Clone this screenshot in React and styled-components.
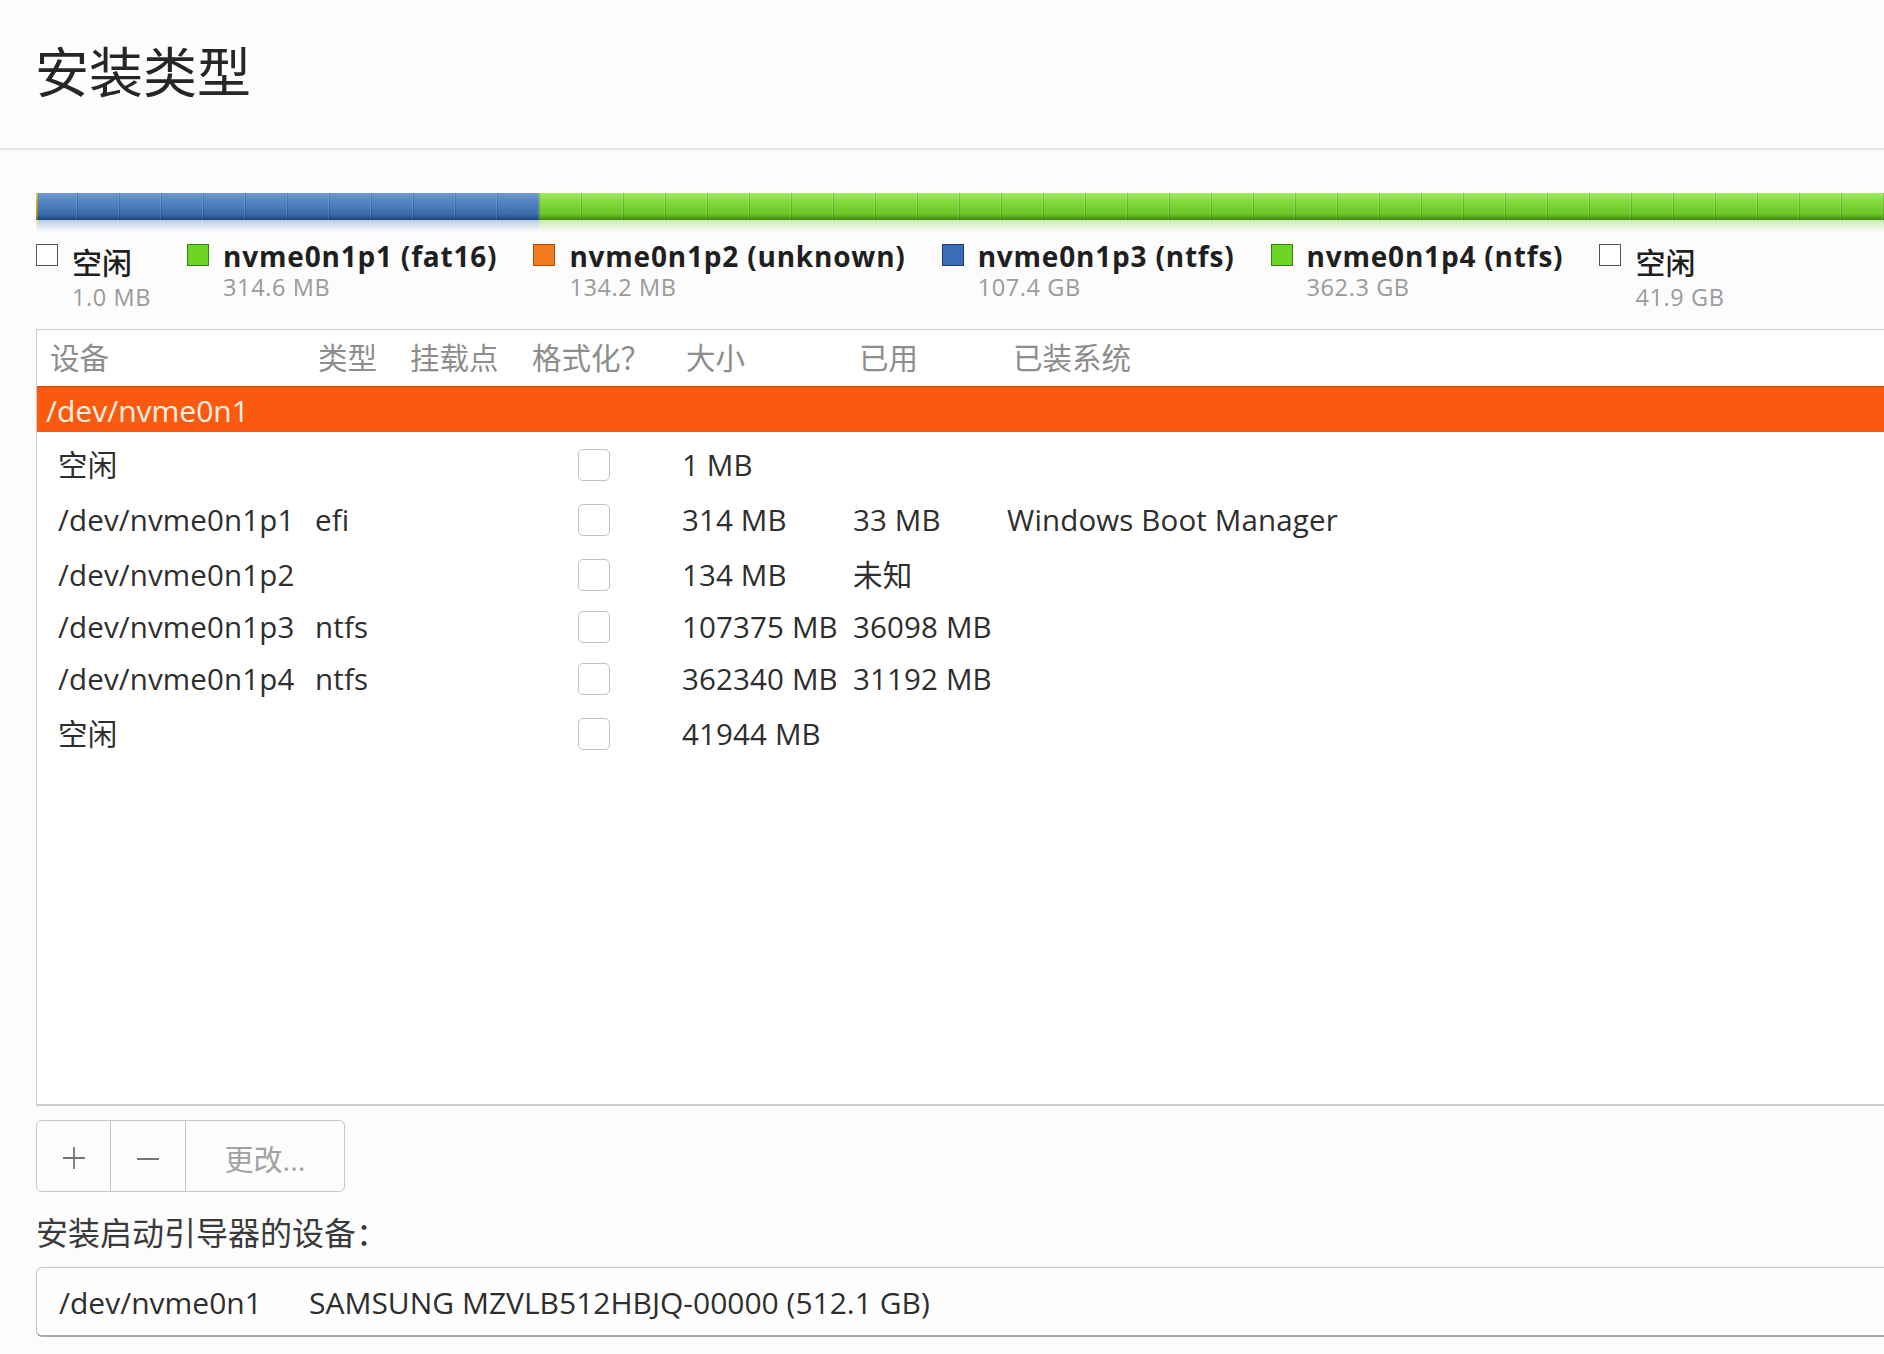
import React from 'react';
import styled, { createGlobalStyle } from 'styled-components';

const GlobalStyle = createGlobalStyle`
  html, body {
    margin: 0;
    padding: 0;
    background: #fcfcfc;
    overflow: hidden;
  }
  body {
    font-family: "Open Sans", "Noto Sans CJK SC", sans-serif;
    color: #333;
  }
`;

const Page = styled.div`
  width: 1884px;
  height: 1354px;
  overflow: hidden;
  background: #fcfcfc;
`;

const Header = styled.header`
  padding: 38px 0 46px 35px;
  border-bottom: 2px solid #e4e4e4;
  background: #fdfdfd;
`;

const Title = styled.h1`
  margin: 0;
  font-family: "Noto Sans CJK SC", sans-serif;
  font-size: 54px;
  font-weight: 400;
  line-height: 64px;
  color: #262626;
`;

const Main = styled.main`
  width: 2390px;
  padding-left: 36px;
`;

// partition bar
const Bar = styled.div`
  position: relative;
  display: flex;
  height: 27px;
  margin-top: 43px;

  &::after {
    content: '';
    position: absolute;
    inset: 0;
    pointer-events: none;
    background: repeating-linear-gradient(
      to right,
      transparent 0 40px,
      rgba(255, 255, 255, 0.12) 40px 41px,
      rgba(0, 0, 0, 0.16) 41px 42px
    );
  }
`;

const fills = {
  blue: ['#7099cf', '#5282c2', '#3d6cad', '#1e4478'],
  green: ['#a2ec62', '#80d93a', '#69c626', '#3f8a12'],
  orange: ['#ffa055', '#f6801f', '#e46a10', '#a34806'],
  free: ['#f4f4f4', '#ececec', '#e2e2e2', '#b8b8b8'],
};

const Segment = styled.div`
  position: relative;
  flex: none;
  height: 100%;
  background: ${({ $kind }) => {
    const c = fills[$kind];
    return `linear-gradient(to bottom, ${c[0]} 0%, ${c[1]} 35%, ${c[2]} 78%, ${c[3]} 100%)`;
  }};

  &::after {
    content: '';
    position: absolute;
    left: 0;
    right: 0;
    top: 100%;
    height: 12px;
    background: ${({ $kind }) =>
      `linear-gradient(to bottom, ${fills[$kind][2]}55, transparent)`};
  }
`;

// legend
const Legend = styled.div`
  display: flex;
  align-items: flex-start;
  gap: 36px;
  height: 89px;
  margin-top: 20px;
`;

const LegendItem = styled.div`
  display: flex;
  align-items: flex-start;
  gap: 14px;
`;

const swatchColors = {
  free: ['#ffffff', '#555555'],
  green: ['#6bd425', '#3b7f12'],
  orange: ['#f47b1d', '#a4500f'],
  blue: ['#3b6db4', '#1c3a6a'],
};

const Swatch = styled.span`
  flex: none;
  width: 20px;
  height: 20px;
  margin-top: 4px;
  background: ${({ $kind }) => swatchColors[$kind][0]};
  border: 1.5px solid ${({ $kind }) => swatchColors[$kind][1]};
`;

const LegendText = styled.div`
  display: flex;
  flex-direction: column;
  gap: ${({ $free }) => ($free ? '4px' : '1px')};
  padding-top: ${({ $free }) => ($free ? '7px' : '0')};
`;

const LegendLabel = styled.span`
  font-size: ${({ $free }) => ($free ? '30px' : '28px')};
  font-weight: ${({ $free }) => ($free ? 500 : 700)};
  letter-spacing: ${({ $free }) => ($free ? '0' : '0.8px')};
  line-height: 32px;
  color: #1f1f1f;
  white-space: nowrap;
`;

const LegendSize = styled.span`
  font-size: 23.5px;
  letter-spacing: 0.6px;
  line-height: 28px;
  color: #9a9a9a;
  white-space: nowrap;
`;

// table
const TableBox = styled.div`
  box-sizing: border-box;
  height: 777px;
  background: #ffffff;
  border-top: 1px solid #cbcbcb;
  border-left: 1px solid #cbcbcb;
  border-bottom: 2px solid #cdcdcd;
`;

const columns = '274px 94px 122px 150px 172px 154px 1fr';

const HeadRow = styled.div`
  display: grid;
  grid-template-columns: ${columns};
  align-items: center;
  height: 56px;
`;

const HeadCell = styled.div`
  padding-left: ${({ $pad }) => $pad}px;
  font-size: 29.5px;
  line-height: 40px;
  color: #8d8d8d;
  white-space: nowrap;
`;

const DiskRow = styled.div`
  box-sizing: border-box;
  display: flex;
  align-items: center;
  height: 46px;
  padding: 3px 0 0 9px;
  background: #fa5a10;
  border-top: 1px solid #d8480a;
  color: #fff1e2;
  font-size: 30px;
  line-height: 40px;
`;

const Rows = styled.div`
  padding-top: 5px;
`;

const Row = styled.div`
  display: grid;
  grid-template-columns: ${columns};
  align-items: center;
  height: ${({ $h }) => $h}px;
`;

const Cell = styled.div`
  padding-left: ${({ $pad }) => $pad}px;
  font-size: 29.5px;
  letter-spacing: 0.15px;
  line-height: 40px;
  color: #2e2e2e;
  white-space: nowrap;
`;

const Check = styled.span`
  display: block;
  box-sizing: border-box;
  width: 32px;
  height: 32px;
  margin-left: 51px;
  border: 1.5px solid #c2c2c2;
  border-radius: 5px;
  background: #fff;
`;

// buttons
const ButtonGroup = styled.div`
  display: flex;
  width: fit-content;
  height: 70px;
  margin-top: 14px;
  border: 1px solid #c6c6c6;
  border-radius: 6px;
  background: #fdfdfd;
  overflow: hidden;
`;

const GroupButton = styled.button`
  display: flex;
  align-items: center;
  justify-content: center;
  width: ${({ $w }) => $w}px;
  padding: 4px 0 0;
  border: none;
  border-left: ${({ $first }) => ($first ? 'none' : '1px solid #c6c6c6')};
  background: transparent;
  font-family: inherit;
  font-size: 29px;
  color: #a2a2a2;
`;

const FieldLabel = styled.div`
  margin-top: 21px;
  font-size: 32px;
  line-height: 40px;
  color: #3a3a3a;
`;

const Combo = styled.div`
  box-sizing: border-box;
  display: flex;
  align-items: center;
  height: 70px;
  margin-top: 14px;
  padding: 3px 0 0 22px;
  background: #fefefe;
  border: 1px solid #c4c4c4;
  border-bottom: 2px solid #a9a9a9;
  border-radius: 6px;
  font-size: 30px;
  line-height: 40px;
  color: #2e2e2e;
`;

const ComboDevice = styled.span`
  width: 250px;
  flex: none;
`;

const parts = [
  { kind: 'free', mb: 1 },
  { kind: 'green', mb: 314.6 },
  { kind: 'orange', mb: 134.2 },
  { kind: 'blue', mb: 107400 },
  { kind: 'green', mb: 362300 },
  { kind: 'free', mb: 41900 },
];
const totalMb = parts.reduce((s, p) => s + p.mb, 0);

const legend = [
  { kind: 'free', label: '空闲', size: '1.0 MB', free: true },
  { kind: 'green', label: 'nvme0n1p1 (fat16)', size: '314.6 MB' },
  { kind: 'orange', label: 'nvme0n1p2 (unknown)', size: '134.2 MB' },
  { kind: 'blue', label: 'nvme0n1p3 (ntfs)', size: '107.4 GB' },
  { kind: 'green', label: 'nvme0n1p4 (ntfs)', size: '362.3 GB' },
  { kind: 'free', label: '空闲', size: '41.9 GB', free: true },
];

const headers = [
  ['设备', 13],
  ['类型', 7],
  ['挂载点', 5],
  ['格式化？', 5],
  ['大小', 9],
  ['已用', 10],
  ['已装系统', 10],
];

const rows = [
  { dev: '空闲', type: '', size: '1 MB', used: '', sys: '', h: 55 },
  { dev: '/dev/nvme0n1p1', type: 'efi', size: '314 MB', used: '33 MB', sys: 'Windows Boot Manager', h: 55 },
  { dev: '/dev/nvme0n1p2', type: '', size: '134 MB', used: '未知', sys: '', h: 55 },
  { dev: '/dev/nvme0n1p3', type: 'ntfs', size: '107375 MB', used: '36098 MB', sys: '', h: 49 },
  { dev: '/dev/nvme0n1p4', type: 'ntfs', size: '362340 MB', used: '31192 MB', sys: '', h: 55 },
  { dev: '空闲', type: '', size: '41944 MB', used: '', sys: '', h: 55 },
];

const Plus = () => (
  <svg width="24" height="24" viewBox="0 0 24 24">
    <path d="M12 1v22M1 12h22" stroke="#747474" strokeWidth="1.8" fill="none" />
  </svg>
);

const Minus = () => (
  <svg width="24" height="24" viewBox="0 0 24 24">
    <path d="M1 13h22" stroke="#747474" strokeWidth="1.8" fill="none" />
  </svg>
);

export default function App() {
  return (
    <Page>
      <GlobalStyle />
      <Header>
        <Title>安装类型</Title>
      </Header>
      <Main>
        <Bar>
          {parts.map((p, i) => (
            <Segment key={i} $kind={p.kind} style={{ width: `${(p.mb / totalMb) * 100}%` }} />
          ))}
        </Bar>

        <Legend>
          {legend.map((item, i) => (
            <LegendItem key={i}>
              <Swatch $kind={item.kind} />
              <LegendText $free={item.free}>
                <LegendLabel $free={item.free}>{item.label}</LegendLabel>
                <LegendSize>{item.size}</LegendSize>
              </LegendText>
            </LegendItem>
          ))}
        </Legend>

        <TableBox>
          <HeadRow>
            {headers.map(([text, pad]) => (
              <HeadCell key={text} $pad={pad}>{text}</HeadCell>
            ))}
          </HeadRow>
          <DiskRow>/dev/nvme0n1</DiskRow>
          <Rows>
            {rows.map((r, i) => (
              <Row key={i} $h={r.h}>
                <Cell $pad={21}>{r.dev}</Cell>
                <Cell $pad={4}>{r.type}</Cell>
                <Cell $pad={0} />
                <Cell $pad={0}><Check /></Cell>
                <Cell $pad={5}>{r.size}</Cell>
                <Cell $pad={4}>{r.used}</Cell>
                <Cell $pad={4}>{r.sys}</Cell>
              </Row>
            ))}
          </Rows>
        </TableBox>

        <ButtonGroup>
          <GroupButton $first $w={73}><Plus /></GroupButton>
          <GroupButton $w={75}><Minus /></GroupButton>
          <GroupButton $w={159}>更改...</GroupButton>
        </ButtonGroup>

        <FieldLabel>安装启动引导器的设备：</FieldLabel>

        <Combo>
          <ComboDevice>/dev/nvme0n1</ComboDevice>
          <span>SAMSUNG MZVLB512HBJQ-00000 (512.1 GB)</span>
        </Combo>
      </Main>
    </Page>
  );
}
